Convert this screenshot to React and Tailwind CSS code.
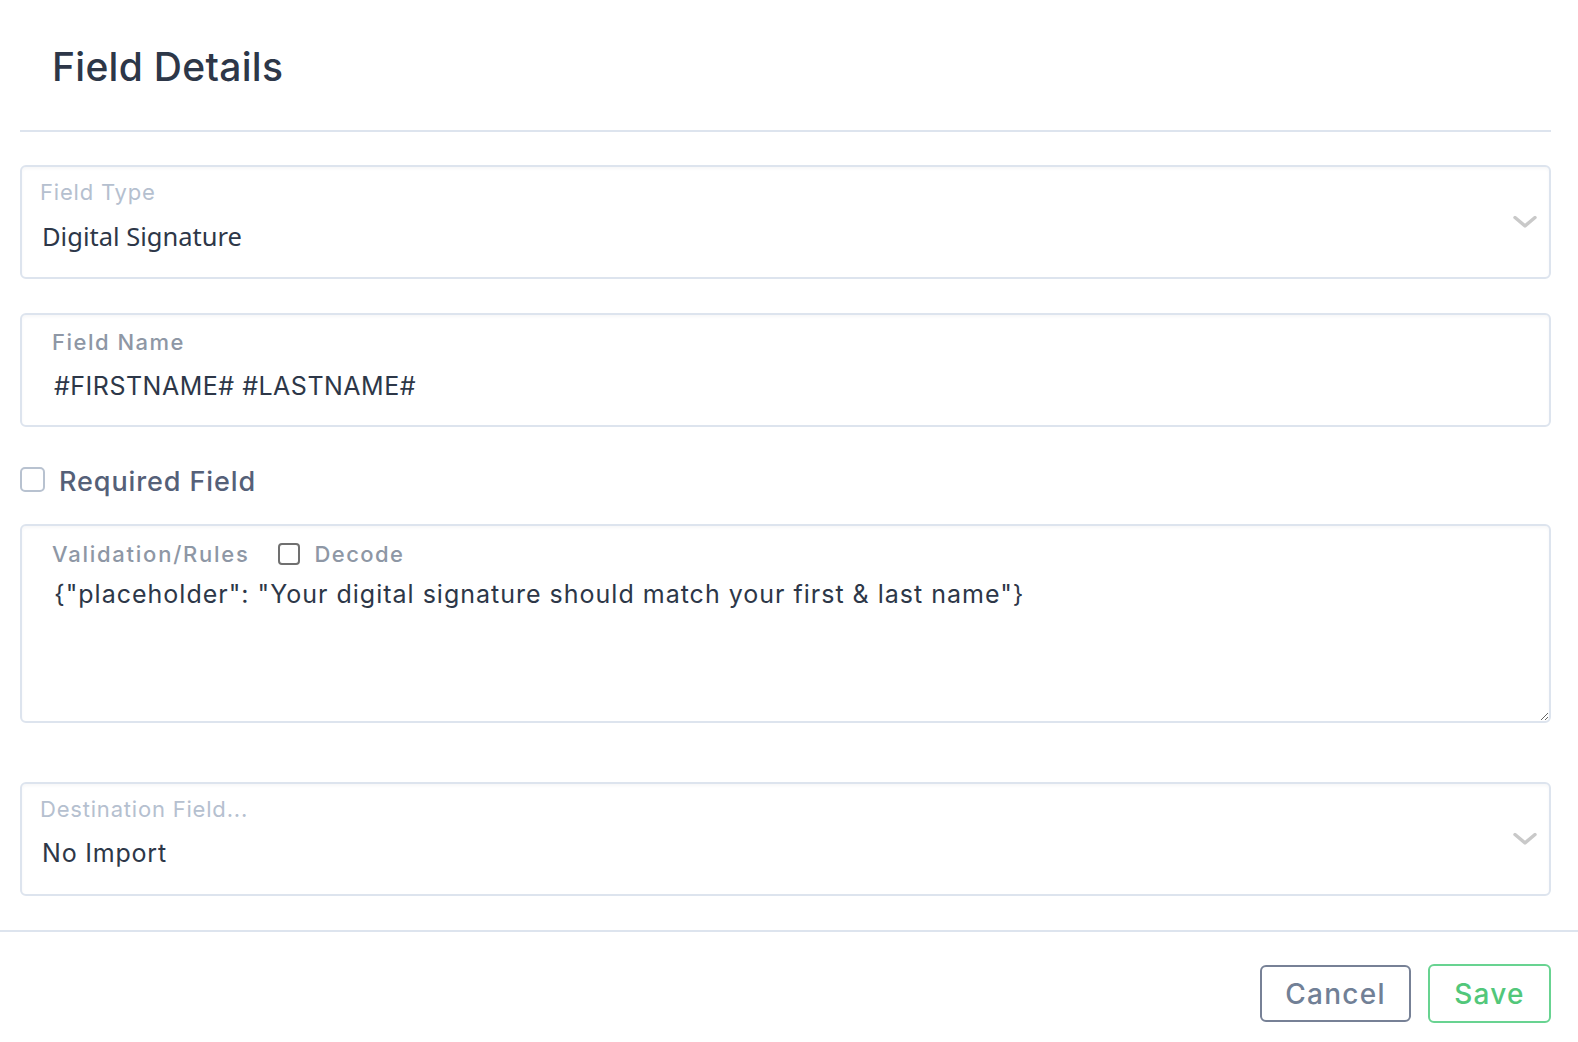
import { useState } from "react";

function Chevron() {
  return (
    <svg width="24" height="13" viewBox="0 0 24 13" fill="none">
      <polyline points="2,2 12,10.5 22,2" stroke="#c9c9c9" strokeWidth="3.4" strokeLinecap="round" strokeLinejoin="round" />
    </svg>
  );
}

function SelectBox({ label, value, valueClass }) {
  return (
    <div className="relative h-[114px] rounded-md border-2 border-[#dde4ee] bg-white shadow-[inset_0_2px_3px_rgba(45,55,72,0.04)]">
      <div className="flex flex-col pl-[18px] pt-[12px]">
        <span className="text-[22px] leading-[26px] tracking-[0.8px] text-[#b5c0cf]">{label}</span>
        <span className={`mt-[16px] ml-[2px] leading-[30px] text-[#2d3748] ${valueClass}`}>{value}</span>
      </div>
      <div className="absolute right-[12px] top-1/2 -translate-y-1/2 flex">
        <Chevron />
      </div>
    </div>
  );
}

export default function App() {
  const [required, setRequired] = useState(false);
  const [decode, setDecode] = useState(false);

  return (
    <div className="min-h-screen w-full bg-white font-['Inter',sans-serif] text-[#2d3748]">
      {/* header */}
      <div className="h-[130px] pl-[52px] pt-[4px] flex items-center">
        <h2 className="text-[39px] font-medium tracking-[0.3px] text-[#2d3748]">Field Details</h2>
      </div>
      <div className="ml-5 mr-[27px] h-0.5 bg-[#dde4ee]" />

      <div className="pl-5 pr-[27px] pt-[33px] pb-[34px]">
        <SelectBox
          label="Field Type"
          value="Digital Signature"
          valueClass="text-[25.5px] font-['Noto_Sans',sans-serif]"
        />

        {/* field name */}
        <div className="mt-[34px] h-[114px] rounded-md border-2 border-[#dde4ee] bg-white shadow-[inset_0_2px_3px_rgba(45,55,72,0.04)]">
          <div className="flex flex-col pl-[30px] pt-[14px]">
            <span className="text-[22px] leading-[26px] tracking-[1.5px] font-medium text-[#8e97a5]">Field Name</span>
            <span className="mt-[16px] ml-[2px] text-[25px] leading-[30px] tracking-[0.5px] text-[#2d3748]">
              #FIRSTNAME# #LASTNAME#
            </span>
          </div>
        </div>

        {/* required */}
        <label className="mt-[37px] flex items-center gap-[14px] cursor-pointer select-none">
          <span
            onClick={() => setRequired(!required)}
            className="h-[25px] w-[25px] shrink-0 rounded-[5px] border-2 border-[#b8c2d0] bg-white"
          />
          <span className="translate-y-[3px] text-[27px] leading-[30px] tracking-[0.9px] font-medium text-[#556078]">
            Required Field
          </span>
        </label>

        {/* validation */}
        <div className="mt-[30px] h-[199px] flex flex-col rounded-md border-2 border-[#dde4ee] bg-white shadow-[inset_0_2px_3px_rgba(45,55,72,0.04)]">
          <div className="flex items-center pl-[30px] pt-[15px]">
            <span className="text-[22px] leading-[26px] tracking-[1.75px] font-medium text-[#8e97a5]">Validation/Rules</span>
            <span
              onClick={() => setDecode(!decode)}
              className="ml-[28px] h-[22px] w-[22px] rounded-[4px] border-2 border-[#707070] bg-white cursor-pointer"
            />
            <span className="ml-[15px] text-[22px] leading-[26px] tracking-[1.4px] font-medium text-[#8e97a5]">Decode</span>
          </div>
          <textarea
            readOnly
            value={'{"placeholder": "Your digital signature should match your first & last name"}'}
            className="flex-1 w-full pl-[32px] pt-[12px] text-[25px] leading-[30px] tracking-[1px] text-[#2d3748] outline-none bg-transparent"
          />
        </div>

        <div className="mt-[59px]">
          <SelectBox label="Destination Field..." value="No Import" valueClass="text-[25px] tracking-[0.8px]" />
        </div>
      </div>

      <div className="h-0.5 w-full bg-[#dde4ee]" />

      {/* footer */}
      <div className="flex justify-end items-center gap-[17px] pr-[27px] pt-[32px]">
        <button className="h-[57px] w-[151px] rounded-md border-2 border-[#778196] text-[28px] tracking-[1.3px] font-medium text-[#718096]">
          Cancel
        </button>
        <button className="h-[59px] w-[123px] rounded-md border-2 border-[#68d391] text-[28px] tracking-[1.2px] font-medium text-[#52c77a]">
          Save
        </button>
      </div>
    </div>
  );
}
